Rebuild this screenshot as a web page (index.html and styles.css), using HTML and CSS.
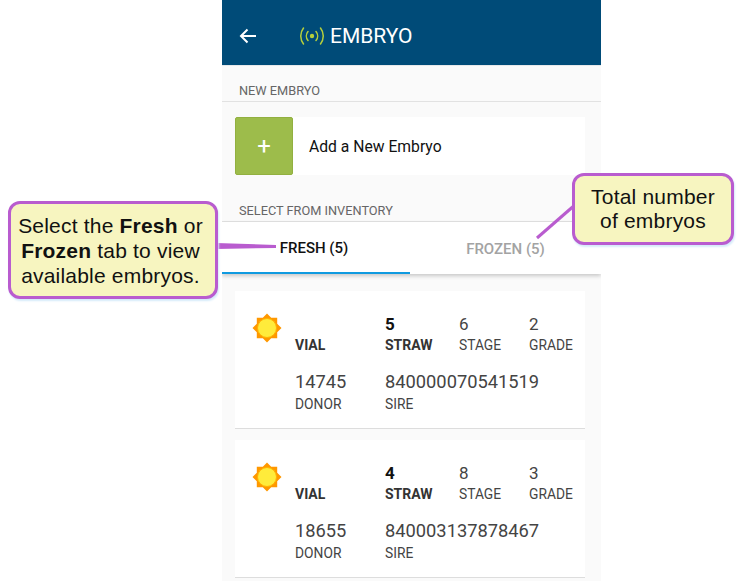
FILE: index.html
```html
<!DOCTYPE html>
<html lang="en">
<head>
  <meta charset="UTF-8" />
  <meta name="viewport" content="width=device-width, initial-scale=1" />
  <title>Embryo</title>
  <link rel="stylesheet" href="styles.css">
</head>
<body>
  <div class="phone">
    <header class="app-bar">
      <svg class="back-icon" width="20" height="20" viewBox="0 0 20 20" aria-hidden="true">
        <path d="M18 10H3M9.500 3.500L3 10l6.500 6.500" fill="none" stroke="#fff" stroke-width="2"/>
      </svg>
      <svg class="signal-icon" width="24" height="20" viewBox="0 0 24 20" aria-hidden="true">
        <circle cx="12" cy="10" r="2.200" fill="#b5cf3c"/>
        <path d="M8 5.500a7 7 0 0 0 0 9M16 5.500a7 7 0 0 1 0 9M3.500 2a13 13 0 0 0 0 16M20.500 2a13 13 0 0 1 0 16" fill="none" stroke="#b5cf3c" stroke-width="1.500" stroke-linecap="round"/>
      </svg>
      <h1>EMBRYO</h1>
    </header>

    <div class="section-label first">NEW EMBRYO</div>
    <div class="add-card">
      <div class="add-btn">+</div>
      <div class="add-text">Add a New Embryo</div>
    </div>

    <div class="section-label second">SELECT FROM INVENTORY</div>
    <div class="tabs">
      <div class="tab active">FRESH (5)</div>
      <div class="tab">FROZEN (5)</div>
    </div>

    <div class="cards">
      <div class="card">
        <svg class="sun" width="30" height="30" viewBox="0 0 30 30" aria-hidden="true">
          <path d="M15 0.500l4.200 4.300h6v6l4.300 4.200-4.300 4.200v6h-6L15 29.500l-4.200-4.300h-6v-6L0.500 15l4.300-4.200v-6h6z" fill="#ff9800"/>
          <circle cx="15" cy="15" r="9.500" fill="#ffeb3b" stroke="#ffb300" stroke-width="1"/>
        </svg>
        <div class="field"><b class="label">VIAL</b></div>
        <div class="field"><b class="num">5</b><b class="label">STRAW</b></div>
        <div class="field"><span class="num">6</span><span class="label">STAGE</span></div>
        <div class="field"><span class="num">2</span><span class="label">GRADE</span></div>
        <div class="field id first-id"><span class="num">14745</span><span class="label">DONOR</span></div>
        <div class="field id wide"><span class="num">840000070541519</span><span class="label">SIRE</span></div>
      </div>
      <div class="card">
        <svg class="sun" width="30" height="30" viewBox="0 0 30 30" aria-hidden="true">
          <path d="M15 0.500l4.200 4.300h6v6l4.300 4.200-4.300 4.200v6h-6L15 29.500l-4.200-4.300h-6v-6L0.500 15l4.300-4.200v-6h6z" fill="#ff9800"/>
          <circle cx="15" cy="15" r="9.500" fill="#ffeb3b" stroke="#ffb300" stroke-width="1"/>
        </svg>
        <div class="field"><b class="label">VIAL</b></div>
        <div class="field"><b class="num">4</b><b class="label">STRAW</b></div>
        <div class="field"><span class="num">8</span><span class="label">STAGE</span></div>
        <div class="field"><span class="num">3</span><span class="label">GRADE</span></div>
        <div class="field id first-id"><span class="num">18655</span><span class="label">DONOR</span></div>
        <div class="field id wide"><span class="num">840003137878467</span><span class="label">SIRE</span></div>
      </div>
      <div class="card"></div>
    </div>
  </div>

  <!-- annotation layer -->
  <svg class="leaders" width="746" height="581" viewBox="0 0 746 581" aria-hidden="true">
    <path d="M216 243L276 245L276 248L216 249z" fill="#b95ccf"/>
    <path d="M537 238L576 204" stroke="#b95ccf" stroke-width="3" fill="none"/>
  </svg>
  <div class="callout callout-left"><p>Select the <b>Fresh</b> or<br><b>Frozen</b> tab to view<br>available embryos.</p></div>
  <div class="callout callout-right"><p>Total number<br>of embryos</p></div>
</body>
</html>
```

FILE: styles.css
```css
* {
  box-sizing: border-box;
}
html, body {
  height: 581px;
  overflow: hidden;
}
body {
  margin: 0;
  padding-left: 222px;
  background: #fff;
  font-family: Roboto, sans-serif;
  position: relative;
}
.phone {
  width: 379px;
  height: 581px;
  background: #fafafa;
  overflow: hidden;
}
.app-bar {
  height: 66px;
  background: #004b78;
  border-bottom: 1px solid #e6e8ea;
  display: flex;
  align-items: center;
  padding: 6px 0 0 16px;
  color: #fff;
}
.signal-icon {
  margin-left: 42px;
}
.app-bar h1 {
  margin: 1px 0 0 6px;
  font-size: 21px;
  font-weight: 400;
}
.section-label {
  font-size: 12.750px;
  line-height: 14px;
  color: #666;
  padding-left: 17px;
  border-bottom: 1px solid #e2e2e2;
}
.section-label.first {
  margin-top: 18px;
  height: 18px;
}
.section-label.second {
  margin-top: 29px;
  height: 18px;
}
.add-card {
  display: flex;
  align-items: center;
  height: 58px;
  margin: 15px 16px 0 13px;
  background: #fff;
}
.add-btn {
  width: 58px;
  height: 58px;
  background: #9dbc4b;
  border: 1px solid #92b040;
  border-radius: 2px;
  color: #fff;
  font-size: 24px;
  display: flex;
  align-items: center;
  justify-content: center;
}
.add-text {
  margin-left: 16px;
  font-size: 15.700px;
  color: #111;
}
.tabs {
  display: flex;
  height: 52px;
  background: #fff;
  box-shadow: 0 2px 4px rgba(0, 0, 0, 0.2);
}
.tab {
  width: 191px;
  display: flex;
  align-items: center;
  justify-content: center;
  padding-top: 2px;
  font-size: 15px;
  font-weight: 500;
  color: #a3a3a3;
}
.tab.active {
  width: 188px;
  padding-right: 4px;
  color: #111;
  border-bottom: 2px solid #0f9ae0;
}
.cards {
  padding: 17px 16px 0 13px;
  display: flex;
  flex-direction: column;
  gap: 11px;
}
.card {
  height: 138px;
  background: #fff;
  border-bottom: 1px solid #ddd;
  display: grid;
  grid-template-columns: 60px 90px 74px 70px 1fr;
  grid-template-rows: 63px 57px;
  color: #444;
}
.sun {
  margin: 22px 0 0 17px;
}
.field {
  display: flex;
  flex-direction: column;
  justify-content: flex-end;
}
.num {
  font-size: 17px;
  line-height: 23px;
}
b.num {
  font-weight: 700;
  color: #111;
}
.label {
  font-size: 13.800px;
  line-height: 18px;
  color: #444;
}
b.label {
  font-size: 14px;
  font-weight: 700;
  color: #333;
}
.id {
  justify-content: flex-start;
  padding-top: 16px;
}
.id .num {
  font-size: 18.300px;
  line-height: 24px;
}
.id .label {
  margin-top: 1px;
}
.first-id {
  grid-column: 2;
}
.wide {
  grid-column: 3 / 6;
}
.leaders {
  position: absolute;
  left: 0;
  top: 0;
}
.callout {
  position: absolute;
  display: flex;
  align-items: center;
  justify-content: center;
  text-align: center;
  background: #f7f5c0;
  border: 3px solid #b95ccf;
  border-radius: 12px;
  box-shadow: 1px 2px 2px #d5ebfa;
  font-family: "Liberation Sans", Arial, sans-serif;
  font-size: 21px;
  line-height: 25px;
  letter-spacing: 0.200px;
  color: #111;
}
.callout p {
  margin: 0;
  white-space: nowrap;
}
.callout-left {
  left: 8px;
  top: 201px;
  width: 210px;
  height: 98px;
  padding-right: 5px;
}
.callout-right {
  left: 572px;
  top: 173px;
  width: 162px;
  height: 72px;
  line-height: 24px;
}
```
